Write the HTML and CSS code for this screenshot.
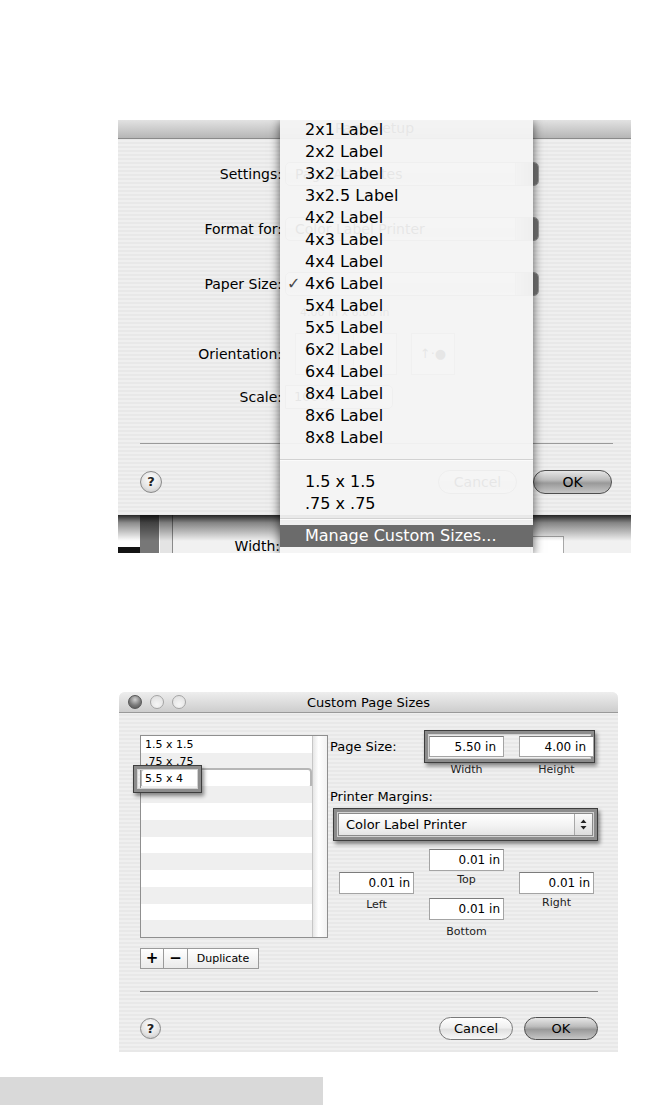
FILE: index.html
```html
<!DOCTYPE html>
<html lang="en">
<head>
    <meta charset="UTF-8">
    <title>Page Setup - Custom Page Sizes</title>
    <link rel="stylesheet" href="styles.css">
</head>
<body>
    <!-- Page Setup sheet with the Paper Size menu open -->
    <div class="shot-setup">
        <div class="setup-dialog">
            <div class="setup-title">Page Setup</div>
            <div class="setup-body">
                <div class="form-row">
                    <div class="form-label">Settings:</div>
                    <div class="popup"><span class="popup-text">Page Attributes</span><span class="popup-arrows"></span></div>
                </div>
                <div class="form-row">
                    <div class="form-label">Format for:</div>
                    <div class="popup"><span class="popup-text">Color Label Printer</span><span class="popup-arrows"></span></div>
                </div>
                <div class="form-row">
                    <div class="form-label">Paper Size:</div>
                    <div class="popup"><span class="popup-text"></span><span class="popup-arrows"></span></div>
                </div>
                <div class="form-info">4.00 in x 6.00 in</div>
                <div class="form-row row-orient">
                    <div class="form-label">Orientation:</div>
                    <div class="orient-set">
                        <span class="orient-box">&#8593;</span>
                        <span class="orient-box">&#8593;&middot;</span>
                        <span class="orient-box">&#8593;&middot;&#9679;</span>
                    </div>
                </div>
                <div class="form-row row-scale">
                    <div class="form-label">Scale:</div>
                    <div class="scale-field">100 %</div>
                </div>
                <div class="setup-sep"></div>
                <div class="setup-footer">
                    <span class="help-btn help-lg">?</span>
                    <span class="pill pill-lg">Cancel</span>
                    <span class="pill pill-lg pill-default">OK</span>
                </div>
            </div>
        </div>
        <div class="setup-backdrop">
            <div class="bd-edge"></div>
            <div class="bd-bar"></div>
            <div class="bd-rule"></div>
            <div class="bd-pane">
                <span class="bd-label">Width:</span>
                <span class="bd-field"></span>
            </div>
        </div>

        <div class="size-menu">
            <div class="menu-list">
                <div class="menu-item"><span class="mark"></span>2x1 Label</div>
                <div class="menu-item"><span class="mark"></span>2x2 Label</div>
                <div class="menu-item"><span class="mark"></span>3x2 Label</div>
                <div class="menu-item"><span class="mark"></span>3x2.5 Label</div>
                <div class="menu-item"><span class="mark"></span>4x2 Label</div>
                <div class="menu-item"><span class="mark"></span>4x3 Label</div>
                <div class="menu-item"><span class="mark"></span>4x4 Label</div>
                <div class="menu-item"><span class="mark">&#10003;</span>4x6 Label</div>
                <div class="menu-item"><span class="mark"></span>5x4 Label</div>
                <div class="menu-item"><span class="mark"></span>5x5 Label</div>
                <div class="menu-item"><span class="mark"></span>6x2 Label</div>
                <div class="menu-item"><span class="mark"></span>6x4 Label</div>
                <div class="menu-item"><span class="mark"></span>8x4 Label</div>
                <div class="menu-item"><span class="mark"></span>8x6 Label</div>
                <div class="menu-item"><span class="mark"></span>8x8 Label</div>
                <div class="menu-sep sep-first"></div>
                <div class="menu-item"><span class="mark"></span>1.5 x 1.5</div>
                <div class="menu-item"><span class="mark"></span>.75 x .75</div>
                <div class="menu-sep sep-second"></div>
                <div class="menu-item active"><span class="mark"></span>Manage Custom Sizes...</div>
            </div>
        </div>
    </div>

    <!-- Custom Page Sizes window -->
    <div class="shot-sizes">
        <div class="sizes-title">
            <div class="lights">
                <span class="light light-on"></span>
                <span class="light"></span>
                <span class="light"></span>
            </div>
            <span class="sizes-title-text">Custom Page Sizes</span>
        </div>
        <div class="sizes-body">
            <div class="sizes-main">
                <div class="sizes-left">
                    <div class="size-list">
                        <div class="list-rows">
                            <div class="list-row">1.5 x 1.5</div>
                            <div class="list-row">.75 x .75</div>
                            <div class="list-row"><div class="row-edit">5.5 x 4</div></div>
                            <div class="list-row"></div>
                            <div class="list-row"></div>
                            <div class="list-row"></div>
                            <div class="list-row"></div>
                            <div class="list-row"></div>
                            <div class="list-row"></div>
                            <div class="list-row"></div>
                            <div class="list-row"></div>
                            <div class="list-row"></div>
                        </div>
                        <div class="list-scroll"></div>
                        <div class="callout callout-row"></div>
                    </div>
                    <div class="seg-buttons">
                        <span class="seg seg-sign">+</span>
                        <span class="seg seg-sign">&minus;</span>
                        <span class="seg seg-text">Duplicate</span>
                    </div>
                </div>

                <div class="sizes-side">
                    <div class="size-row">
                        <span class="side-label">Page Size:</span>
                        <div class="callout size-pair">
                            <span class="field field-size">5.50 in</span>
                            <span class="field field-size">4.00 in</span>
                        </div>
                    </div>
                    <div class="size-captions">
                        <span>Width</span>
                        <span>Height</span>
                    </div>
                    <div class="side-label margins-title">Printer Margins:</div>
                    <div class="callout popup-wrap">
                        <div class="popup-select">
                            <span class="popup-select-text">Color Label Printer</span>
                            <span class="stepper">
                                <svg width="7" height="11" viewBox="0 0 7 11"><path d="M3.5 0.5 L6.5 4 L0.5 4 Z M0.5 7 L6.5 7 L3.5 10.5 Z" fill="#222"/></svg>
                            </span>
                        </div>
                    </div>
                    <div class="margin-grid">
                        <div class="margin-col col-side">
                            <span class="field">0.01 in</span>
                            <span class="caption">Left</span>
                        </div>
                        <div class="margin-col col-mid">
                            <span class="field">0.01 in</span>
                            <span class="caption">Top</span>
                            <span class="field field-bottom">0.01 in</span>
                            <span class="caption caption-bottom">Bottom</span>
                        </div>
                        <div class="margin-col col-side">
                            <span class="field">0.01 in</span>
                            <span class="caption caption-right">Right</span>
                        </div>
                    </div>
                </div>
            </div>
            <div class="sizes-sep"></div>
            <div class="sizes-footer">
                <span class="help-btn">?</span>
                <span class="pill">Cancel</span>
                <span class="pill pill-default">OK</span>
            </div>
        </div>
    </div>

    <div class="caption-bar"></div>
</body>
</html>
```

FILE: styles.css
```css
body {
    margin: 0;
    background: #fff;
    font-family: "DejaVu Sans", "Liberation Sans", sans-serif;
    color: #000;
}

/* ---------- Page Setup shot ---------- */
.shot-setup {
    position: relative;
    width: 513px;
    height: 433px;
    margin: 120px 0 0 118px;
    overflow: hidden;
}

.setup-dialog {
    height: 395px;
    background: repeating-linear-gradient(#efefef 0 2px, #e8e8e8 2px 4px);
}

.setup-title {
    height: 18px;
    border-bottom: 1px solid #8a8a8a;
    background: linear-gradient(#e2e2e2, #b6b6b6);
    font-size: 14px;
    line-height: 16px;
    text-align: center;
}

.setup-body {
    height: 376px;
    overflow: hidden;
}

.form-row {
    display: flex;
    align-items: center;
    margin-top: 31px;
}

.form-row:first-child {
    margin-top: 23px;
}

.form-label {
    width: 164px;
    margin-right: 3px;
    text-align: right;
    font-size: 14px;
}

.popup {
    display: flex;
    align-items: center;
    box-sizing: border-box;
    width: 254px;
    height: 24px;
    padding-left: 9px;
    border: 1px solid #9a9a9a;
    border-radius: 5px;
    background: linear-gradient(#fdfdfd, #eeeeee 50%, #e2e2e2 51%, #f4f4f4);
    font-size: 14px;
}

.popup-text {
    flex: 1;
}

.popup-arrows {
    align-self: stretch;
    width: 22px;
    border-left: 1px solid #b0b0b0;
    border-radius: 0 4px 4px 0;
    background: linear-gradient(90deg, #d6d6d6, #6f6f6f);
}

.form-info {
    margin: 10px 0 0 182px;
    font-size: 11px;
    line-height: 14px;
}

.row-orient {
    margin-top: 13px;
    height: 42px;
}

.orient-set {
    display: flex;
    gap: 14px;
    margin-left: 10px;
}

.orient-box {
    box-sizing: border-box;
    width: 44px;
    height: 42px;
    border: 1px solid #a8a8a8;
    background: #f7f7f7;
    font-size: 13px;
    line-height: 40px;
    text-align: center;
}

.row-scale {
    margin-top: 10px;
}

.scale-field {
    box-sizing: border-box;
    width: 108px;
    height: 24px;
    padding-left: 8px;
    border: 1px solid #9a9a9a;
    border-radius: 0 5px 5px 0;
    background: #fff;
    font-size: 13px;
    line-height: 22px;
}

.setup-sep {
    height: 1px;
    margin: 34px 18px 0 22px;
    background: #9a9a9a;
}

.setup-footer {
    display: flex;
    align-items: center;
    gap: 16px;
    height: 24px;
    margin-top: 26px;
    padding: 0 19px 0 22px;
}

.setup-footer .help-btn {
    margin-right: auto;
}

/* window below the sheet, with the sheet's shadow on it */
.setup-backdrop {
    position: relative;
    display: flex;
    height: 38px;
}

.setup-backdrop::after {
    content: "";
    position: absolute;
    top: 0;
    left: 0;
    right: 0;
    height: 26px;
    background: linear-gradient(rgba(0, 0, 0, 0.85), rgba(0, 0, 0, 0.45) 30%, rgba(0, 0, 0, 0));
}

.bd-edge {
    width: 22px;
    background: linear-gradient(#fff 32px, #141414 32px);
}

.bd-bar {
    width: 19px;
    border-right: 1px solid #fff;
    background: #777;
}

.bd-rule {
    width: 12px;
    border-right: 1px solid #8a8a8a;
    background: #e4e4e4;
}

.bd-pane {
    flex: 1;
    display: flex;
    align-items: flex-start;
    background: #f1f1f1;
}

.bd-label {
    width: 107px;
    margin-top: 23px;
    text-align: right;
    font-size: 14px;
    line-height: 16px;
}

.bd-field {
    box-sizing: border-box;
    width: 34px;
    height: 18px;
    margin: 21px 0 0 250px;
    border: 1px solid #a8a8a8;
    background: #fff;
}

/* the open Paper Size menu, lying over the sheet */
.size-menu {
    position: absolute;
    top: 0;
    bottom: 0;
    left: 162px;
    width: 253px;
    background: rgba(244, 244, 244, 0.94);
    box-shadow: 0 2px 10px rgba(0, 0, 0, 0.65);
    font-size: 16px;
}

.menu-list {
    margin-top: -1px;
}

.menu-item {
    display: flex;
    height: 22px;
    padding-left: 7px;
    line-height: 22px;
    white-space: nowrap;
}

.mark {
    width: 18px;
    color: #4a4a4a;
    font-size: 16px;
}

.menu-item.active {
    background: #6b6b6b;
    color: #fff;
}

.menu-sep {
    height: 1px;
    border-bottom: 1px solid #fbfbfb;
    background: #d2d2d2;
}

.sep-first {
    margin: 10px 0 10px;
}

.sep-second {
    margin: 3px 0 5px;
}

/* ---------- buttons shared by both shots ---------- */
.help-btn {
    box-sizing: border-box;
    width: 21px;
    height: 21px;
    border: 1px solid #8a8a8a;
    border-radius: 50%;
    background: radial-gradient(circle at 50% 35%, #ffffff, #e2e2e2 60%, #b9b9b9);
    font-size: 13px;
    font-weight: bold;
    line-height: 19px;
    text-align: center;
    color: #222;
}

.help-lg {
    width: 22px;
    height: 22px;
    line-height: 20px;
}

.pill {
    box-sizing: border-box;
    width: 74px;
    height: 23px;
    border: 1px solid #7a7a7a;
    border-radius: 12px;
    background: linear-gradient(#ffffff, #f0f0f0 45%, #e0e0e0 55%, #f8f8f8);
    font-size: 13px;
    line-height: 21px;
    text-align: center;
}

.pill-lg {
    width: 79px;
    height: 24px;
    font-size: 14px;
    line-height: 22px;
}

.pill-default {
    border-color: #4e4e4e;
    background: linear-gradient(#e6e6e6, #bdbdbd 40%, #999999 55%, #c6c6c6);
}

/* ---------- Custom Page Sizes shot ---------- */
.shot-sizes {
    width: 499px;
    height: 360px;
    margin: 139px 0 0 119px;
    border-radius: 6px 6px 0 0;
    overflow: hidden;
    background: repeating-linear-gradient(#efefef 0 2px, #e8e8e8 2px 4px);
}

.sizes-title {
    display: flex;
    align-items: center;
    height: 20px;
    border-bottom: 1px solid #999;
    background: linear-gradient(#eeeeee, #cdcdcd);
}

.lights {
    display: flex;
    gap: 8px;
    width: 58px;
    padding-left: 9px;
}

.light {
    box-sizing: border-box;
    width: 14px;
    height: 14px;
    border: 1px solid #a4a4a4;
    border-radius: 50%;
    background: radial-gradient(circle at 50% 70%, #f6f6f6, #dcdcdc);
}

.light-on {
    border-color: #555;
    background: radial-gradient(circle at 50% 30%, #d0d0d0, #7a7a7a 55%, #4e4e4e);
}

.sizes-title-text {
    flex: 1;
    margin-right: 67px;
    text-align: center;
    font-size: 13px;
}

.sizes-body {
    padding: 17px 20px 0 21px;
}

.sizes-main {
    display: flex;
}

.sizes-left {
    width: 191px;
}

.size-list {
    position: relative;
    display: flex;
    box-sizing: border-box;
    height: 203px;
    margin-top: 5px;
    border: 1px solid #8f8f8f;
    background: #fff;
}

.list-rows {
    flex: 1;
    overflow: hidden;
}

.list-row {
    height: 16.75px;
    padding-left: 4px;
    font-size: 11px;
    line-height: 17px;
}

.list-row:nth-child(even) {
    background: #efefef;
}

.row-edit {
    height: 17px;
    margin: 0 2px 0 -3px;
    padding-left: 3px;
    border-radius: 2px;
    background: #fff;
    box-shadow: 0 0 0 2px #b6b6b6;
}

.list-scroll {
    width: 14px;
    border-left: 1px solid #c6c6c6;
    background: linear-gradient(90deg, #e6e6e6, #ffffff 40%, #f2f2f2);
}

/* grey frames drawn over the screenshot to point at fields */
.callout {
    box-sizing: border-box;
    border: 1px solid #3e3e3e;
    box-shadow: inset 0 0 0 3px #8c8c8c, inset 0 0 0 4px #d2d2d2, 2px 3px 4px rgba(0, 0, 0, 0.45);
}

.callout-row {
    position: absolute;
    top: 29px;
    left: -8px;
    width: 69px;
    height: 28px;
}

.seg-buttons {
    display: flex;
    margin-top: 10px;
}

.seg {
    box-sizing: border-box;
    height: 21px;
    border: 1px solid #9a9a9a;
    border-left: none;
    background: linear-gradient(#ffffff, #eaeaea);
    text-align: center;
    font-size: 11px;
    line-height: 19px;
}

.seg:first-child {
    border-left: 1px solid #9a9a9a;
}

.seg-sign {
    width: 24px;
    font-size: 15px;
    font-weight: bold;
}

.seg-text {
    width: 71px;
}

.sizes-side {
    margin-left: 2px;
    width: 268px;
}

.size-row {
    display: flex;
    align-items: center;
}

.side-label {
    width: 94px;
    font-size: 13px;
    line-height: 16px;
}

.size-pair {
    display: flex;
    gap: 15px;
    align-items: center;
    width: 171px;
    height: 33px;
    padding-left: 4px;
}

.field {
    display: block;
    box-sizing: border-box;
    width: 75px;
    height: 22px;
    padding-right: 3px;
    border: 1px solid #a4a4a4;
    border-top-color: #7c7c7c;
    background: #fff;
    font-size: 12px;
    line-height: 21px;
    text-align: right;
}

.field-size {
    width: 75px;
    height: 21px;
    padding-right: 7px;
    line-height: 20px;
}

.size-captions {
    display: flex;
    gap: 15px;
    padding-left: 99px;
    font-size: 11px;
    line-height: 13px;
    color: #222;
}

.size-captions span {
    width: 75px;
    text-align: center;
}

.margins-title {
    width: auto;
    margin-top: 13px;
}

.popup-wrap {
    width: 265px;
    height: 33px;
    margin: 3px 0 0 3px;
    padding: 4px;
}

.popup-select {
    display: flex;
    align-items: center;
    box-sizing: border-box;
    height: 23px;
    padding-left: 7px;
    border: 1px solid #8a8a8a;
    background: linear-gradient(#ffffff, #f3f3f3 55%, #e4e4e4);
    font-size: 13px;
}

.popup-select-text {
    flex: 1;
}

.stepper {
    display: flex;
    align-items: center;
    justify-content: center;
    align-self: stretch;
    width: 17px;
    border-left: 1px solid #a8a8a8;
    background: linear-gradient(#fafafa, #dcdcdc);
}

.margin-grid {
    display: flex;
    gap: 15px;
    margin: 8px 0 0 9px;
}

.margin-col {
    width: 75px;
}

.col-side {
    margin-top: 23px;
}

.caption {
    display: block;
    font-size: 11px;
    line-height: 14px;
    text-align: center;
    color: #222;
}

.col-side .caption {
    margin-top: 4px;
}

.col-mid .caption {
    margin-top: 2px;
}

.caption-right {
    margin-top: 2px !important;
}

.field-bottom {
    margin-top: 11px;
}

.caption-bottom {
    margin-top: 5px !important;
}

.sizes-sep {
    height: 1px;
    margin-top: 22px;
    background: #8c8c8c;
}

.sizes-footer {
    display: flex;
    align-items: center;
    gap: 11px;
    margin-top: 25px;
}

.sizes-footer .help-btn {
    margin-right: auto;
}

.caption-bar {
    width: 323px;
    height: 28px;
    margin-top: 25px;
    background: #d9d9d9;
}
```
